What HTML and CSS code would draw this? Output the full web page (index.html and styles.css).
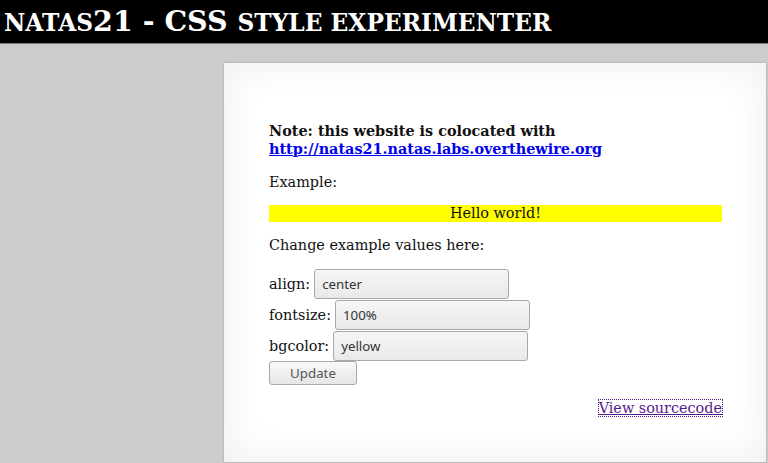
FILE: index.html
```html
<!DOCTYPE html>
<html>
<head>
<meta charset="utf-8">
<link rel="stylesheet" href="styles.css">
</head>
<body>
<h1 class="title"><span class="sc">natas</span>21 - CSS <span class="sc">style experimenter</span></h1>
<div class="content">
  <p class="note"><b>Note: this website is colocated with <a class="colink" href="#">http://natas21.natas.labs.overthewire.org</a></b></p>
  <p class="para">Example:</p>
  <div class="example">Hello world!</div>
  <p class="para">Change example values here:</p>
  <form class="form">
    <div class="row">align: <input class="field field-align" value="center"></div>
    <div class="row">fontsize: <input class="field" value="100%"></div>
    <div class="row">bgcolor: <input class="field" value="yellow"></div>
    <button type="button" class="btn">Update</button>
  </form>
  <div class="source"><a class="srclink" href="#">View sourcecode</a></div>
</div>
</body>
</html>
```
FILE: styles.css
```css
html, body {
  margin: 0;
  padding: 0;
}
body {
  background: #cccccc;
  font-family: "DejaVu Serif", serif;
  font-size: 14.4px;
  color: #111;
  height: 463px;
  overflow: hidden;
}
.title {
  margin: 0;
  background: #000;
  color: #fff;
  font-weight: bold;
  font-size: 28.5px;
  line-height: 43px;
  height: 43px;
  padding-left: 4px;
  border-bottom: 1px solid #777;
  white-space: nowrap;
}
.sc {
  text-transform: uppercase;
  font-size: 23.3px;
}
.content {
  margin: 19px 0 0 224px;
  width: 542px;
  height: 399px;
  box-sizing: border-box;
  background: #fff;
  padding: 59px 44px 0 45px;
  box-shadow: inset 0 0 40px rgba(0,0,0,0.07), 0 0 2px #999;
}
.note {
  margin: 0 0 15px 0;
  line-height: 18px;
}
.colink {
  color: #0000ee;
}
.para {
  margin: 0 0 14px 0;
  line-height: 18px;
}
.example {
  background: yellow;
  text-align: center;
  line-height: 17px;
  margin-bottom: 14px;
}
.form {
  margin: 0;
  padding-top: 0;
}
.row {
  display: flex;
  align-items: center;
  gap: 4px;
  height: 31px;
}
.field {
  width: 195px;
  height: 30px;
  box-sizing: border-box;
  border: 1px solid #a8a8a8;
  border-radius: 3px;
  background: linear-gradient(#f6f6f6, #e9e9e9);
  font-family: "Noto Sans", sans-serif;
  font-size: 13.3px;
  padding: 0 7px;
  color: #333;
}
.btn {
  margin-top: 0;
  width: 88px;
  height: 24px;
  border: 1px solid #a8a8a8;
  border-radius: 3px;
  background: linear-gradient(#f8f8f8, #e6e6e6);
  font-family: "Noto Sans", sans-serif;
  font-size: 13.3px;
  color: #555;
  padding: 0;
}
.source {
  text-align: right;
  margin-top: 15px;
}
.srclink {
  color: #551a8b;
  outline: 1px dotted #551a8b;
}
```
